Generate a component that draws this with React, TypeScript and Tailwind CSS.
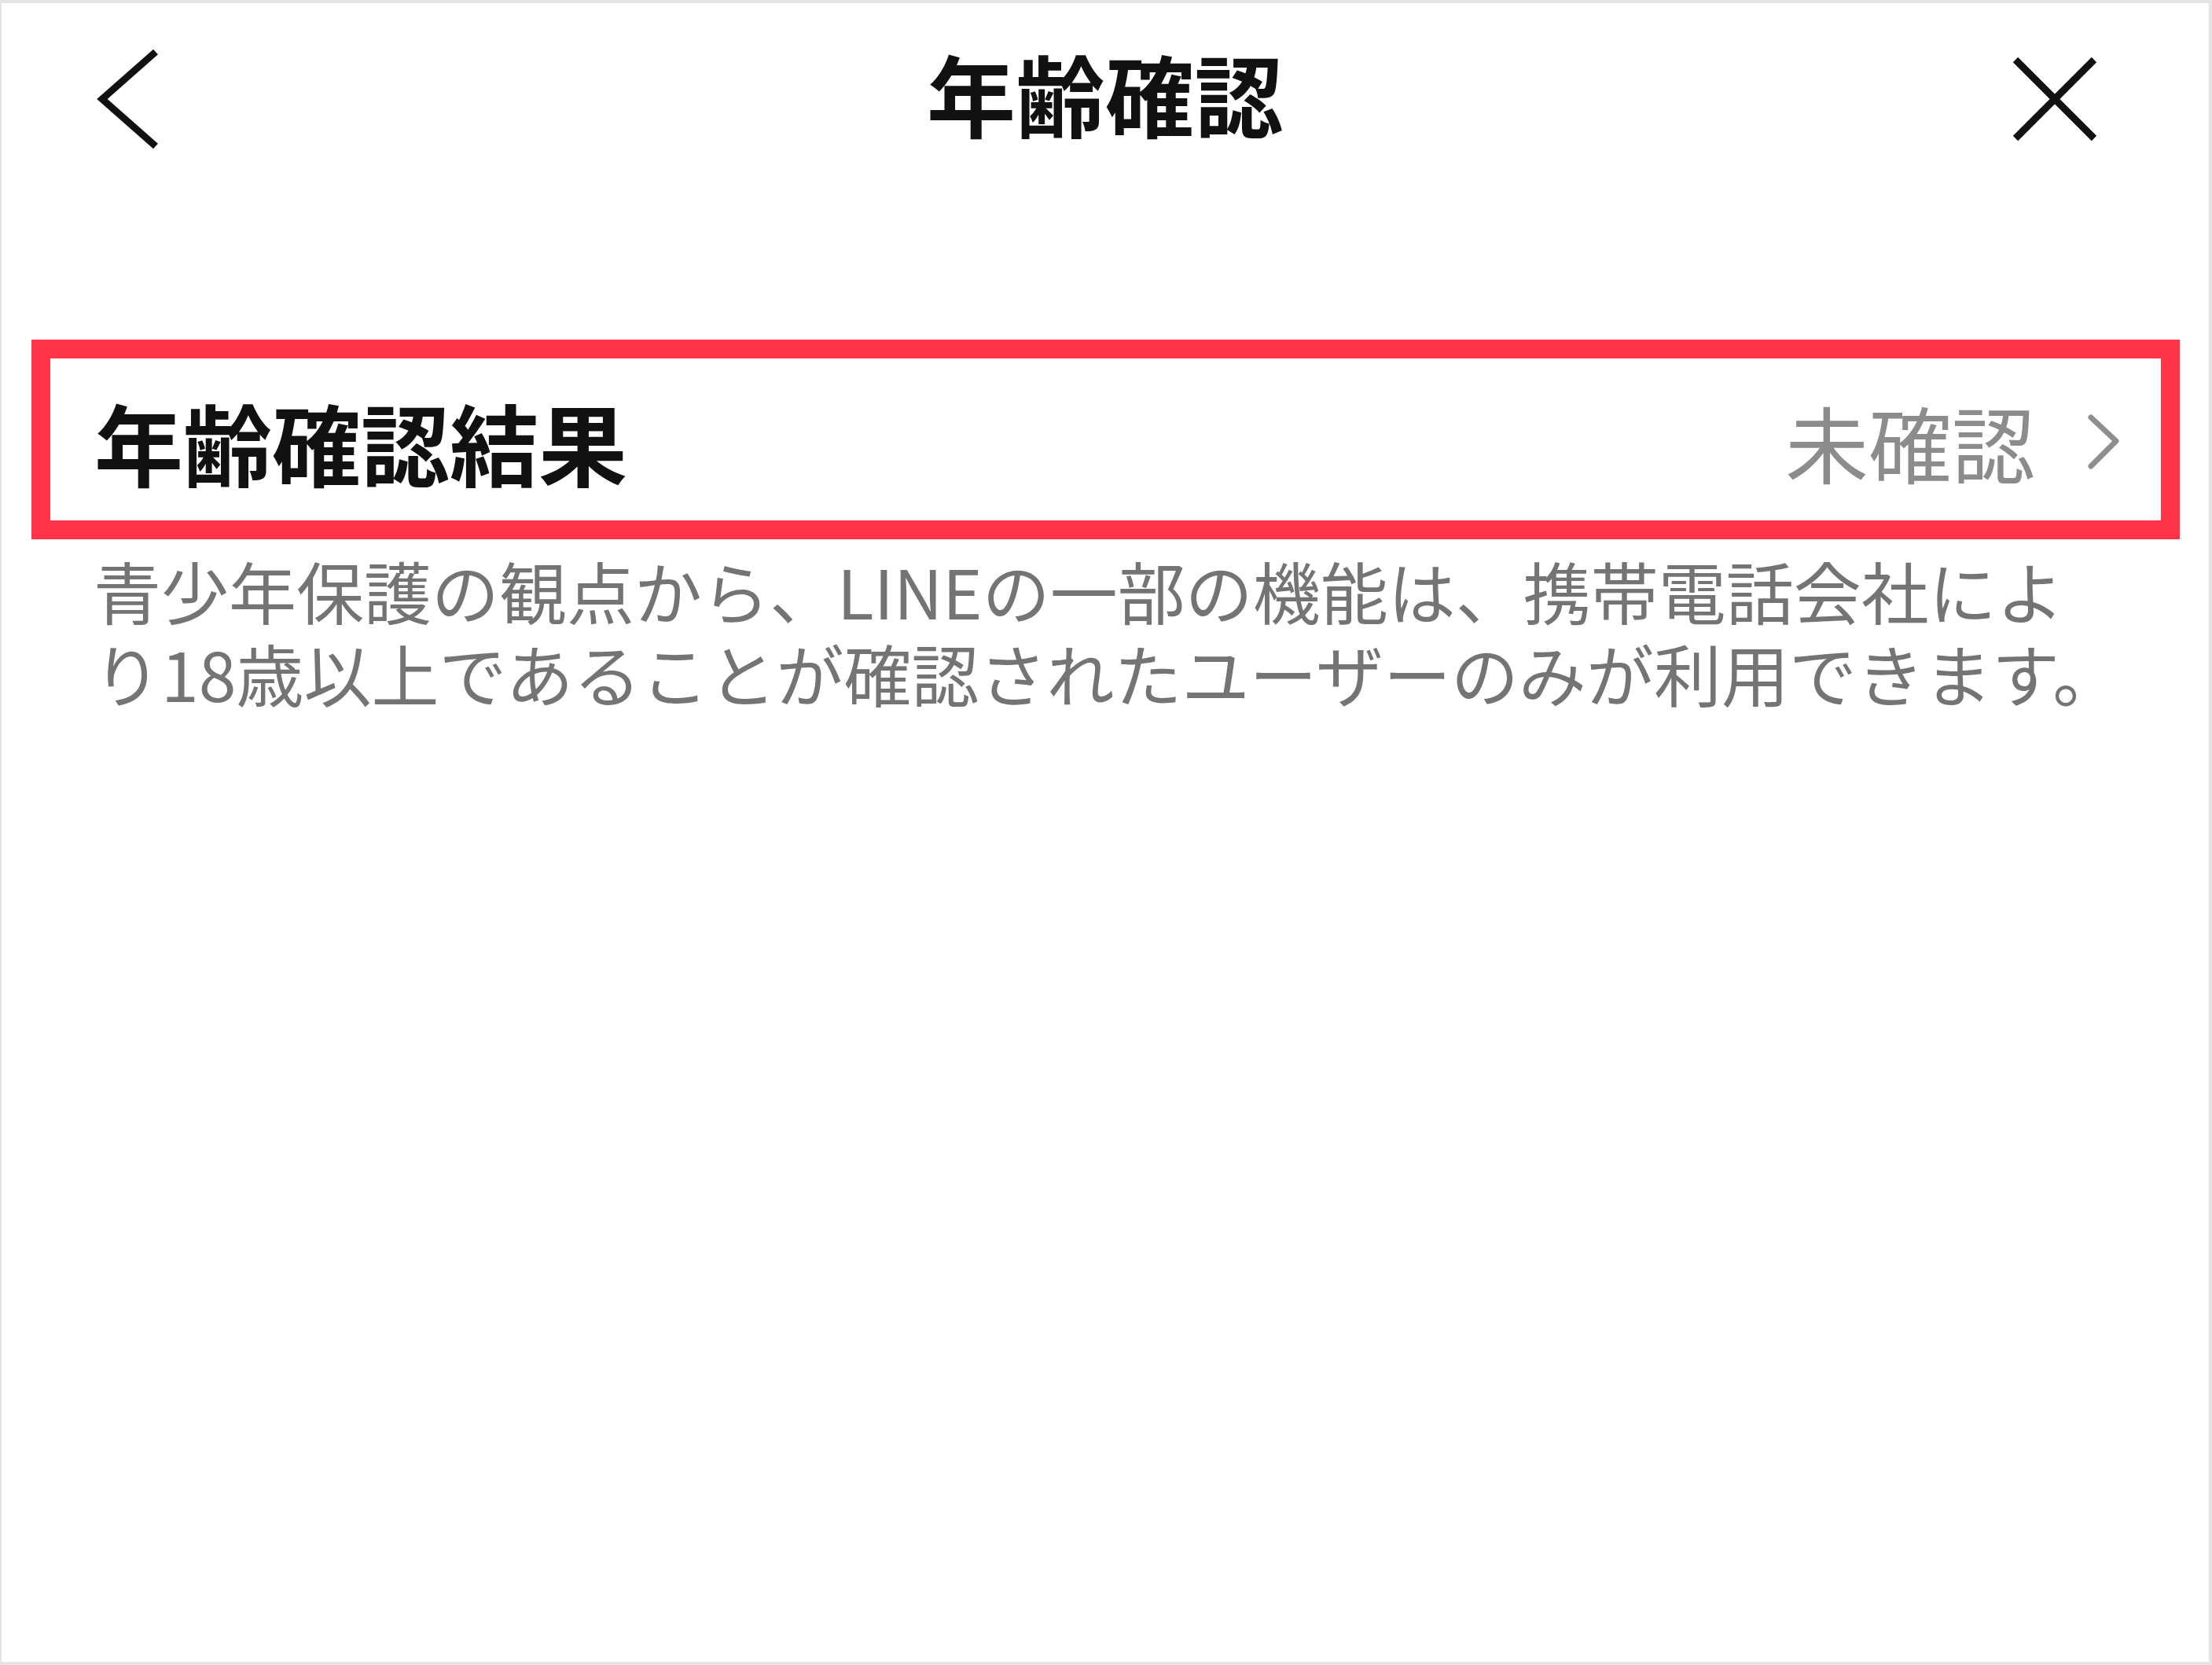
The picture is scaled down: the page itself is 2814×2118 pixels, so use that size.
export default function App() {
  return (
    <div
      className="w-[2814px] h-[2118px] bg-white border-t-[4px] border-b-[4px] border-l-[2px] border-r-[4px] border-[#e4e4e4] overflow-hidden"
      style={{ fontFamily: '"Noto Sans CJK JP", "Noto Sans", sans-serif' }}
    >
      {/* header */}
      <div className="h-[244px] grid grid-cols-[1fr_auto_1fr] items-center px-[110px]">
        <div className="flex justify-start">
          <svg width="100" height="140" viewBox="0 0 100 140" fill="none">
            <path d="M86 10 L18 70 L86 130" stroke="#111" strokeWidth="9" strokeLinejoin="miter" />
          </svg>
        </div>
        <h1 className="text-[113px] leading-none font-bold text-[#111] tracking-[0.5px] pb-[18px]">年齢確認</h1>
        <div className="flex justify-end">
          <svg width="120" height="120" viewBox="0 0 120 120" fill="none" className="mr-[26px]">
            <path d="M10 10 L110 110 M110 10 L10 110" stroke="#111" strokeWidth="9" />
          </svg>
        </div>
      </div>

      {/* result row */}
      <div className="mt-[184px] ml-[38px] mr-[37px] border-[24px] border-[#fe3249]">
        <div className="h-[206px] flex items-center justify-between pl-[56px] pr-[48px] pt-[4px]">
          <span className="text-[113px] leading-none font-bold text-[#111]">年齢確認結果</span>
          <div className="flex items-center gap-[62px]">
            <span className="text-[106px] leading-none text-[#8c8c8c]">未確認</span>
            <svg width="50" height="80" viewBox="0 0 50 80" fill="none" className="mt-[4px]">
              <path d="M9 8 L41 38 L9 70" stroke="#8e8e8e" strokeWidth="7" strokeLinecap="round" strokeLinejoin="round" />
            </svg>
          </div>
        </div>
      </div>

      {/* description */}
      <div className="mt-[12px] pl-[117px] pr-[100px] text-[86px] leading-[105px] text-[#747474] whitespace-nowrap">
        <p>青少年保護の観点から、LINEの一部の機能は、携帯電話会社によ</p>
        <p>り18歳以上であることが確認されたユーザーのみが利用できます。</p>
      </div>
    </div>
  );
}
